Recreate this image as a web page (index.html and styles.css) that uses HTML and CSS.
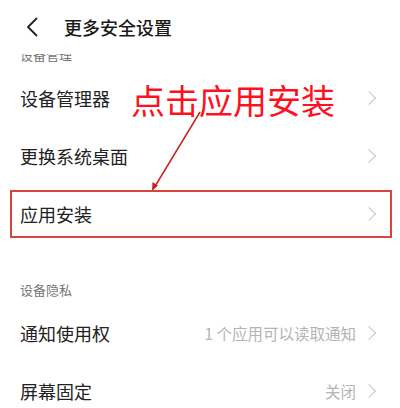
FILE: index.html
```html
<!DOCTYPE html>
<html lang="zh-CN">
<head>
    <meta charset="UTF-8">
    <meta name="viewport" content="width=device-width, initial-scale=1.0">
    <title>更多安全设置</title>
    <link rel="stylesheet" href="styles.css">
</head>
<body>
    <div class="page">
        <div class="header">
            <svg class="back" width="12" height="20" viewBox="0 0 12 20">
                <path d="M10.5 1.5 L2 10 L10.5 18.5" fill="none" stroke="#222" stroke-width="1.8" stroke-linecap="round" stroke-linejoin="round"/>
            </svg>
            <span class="title">更多安全设置</span>
        </div>

        <div class="group-label clipped"><span>设备管理</span></div>

        <div class="row">
            <span class="name">设备管理器</span>
            <span class="chev"></span>
        </div>
        <div class="row">
            <span class="name">更换系统桌面</span>
            <span class="chev"></span>
        </div>
        <div class="row marked">
            <span class="name">应用安装</span>
            <span class="chev"></span>
            <div class="mark-box"></div>
        </div>

        <div class="group-label section">设备隐私</div>

        <div class="row">
            <span class="name">通知使用权</span>
            <span class="value">1 个应用可以读取通知</span>
            <span class="chev"></span>
        </div>
        <div class="row">
            <span class="name">屏幕固定</span>
            <span class="value">关闭</span>
            <span class="chev"></span>
        </div>

        <!-- annotation -->
        <div class="note">点击应用安装</div>
        <svg class="arrow" width="400" height="408" viewBox="0 0 400 408">
            <line x1="200" y1="112" x2="154" y2="188" stroke="#c9221f" stroke-width="1.5"/>
            <path d="M152 191 L152.5 182 L158 185.5 Z" fill="#c9221f"/>
        </svg>
    </div>
</body>
</html>
```

FILE: styles.css
```css
* {
    margin: 0;
    padding: 0;
    box-sizing: border-box;
}
html, body {
    width: 100%;
    height: 100%;
    background: white;
    font-family: "Noto Sans CJK SC", "Noto Sans", sans-serif;
    color: #222;
    overflow: hidden;
}
.page {
    position: relative;
    width: 400px;
    height: 408px;
}
.header {
    height: 54px;
    display: flex;
    align-items: center;
    padding-left: 26px;
    gap: 26px;
}
.header .title {
    font-size: 18px;
    font-weight: 500;
    color: #1a1a1a;
}
.group-label {
    font-size: 13px;
    color: #777;
    padding-left: 20px;
}
.clipped {
    height: 15px;
    overflow: hidden;
}
.clipped span {
    display: block;
    line-height: 14px;
    margin-top: -6px;
}
.section {
    padding-top: 38px;
    padding-bottom: 5px;
    line-height: 18px;
}
.row {
    position: relative;
    height: 58px;
    display: flex;
    align-items: center;
    padding: 0 22px 0 20px;
}
.row .name {
    font-size: 18px;
    flex: 1;
}
.row .value {
    font-size: 15.5px;
    color: #b4b4b4;
    margin-right: 8px;
}
.chev {
    width: 10px;
    height: 10px;
    border-top: 1.5px solid #c6c6c6;
    border-right: 1.5px solid #c6c6c6;
    transform: rotate(45deg);
    margin-right: 4px;
}
.marked .mark-box {
    position: absolute;
    left: 10px;
    right: 8px;
    top: 5px;
    bottom: 5px;
    border: 2px solid #d8443c;
}
.note {
    position: absolute;
    left: 131px;
    top: 78px;
    font-size: 34px;
    line-height: 44px;
    color: #ff1020;
}
.arrow {
    position: absolute;
    left: 0;
    top: 0;
}
```
